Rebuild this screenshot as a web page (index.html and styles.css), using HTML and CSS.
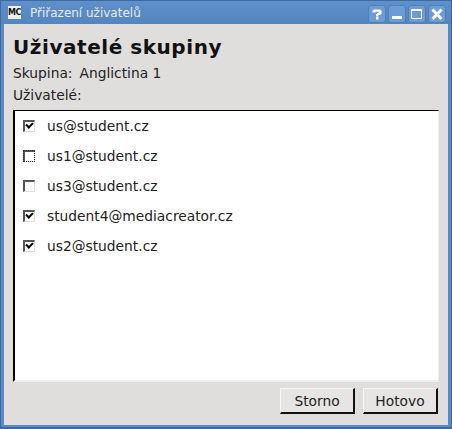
FILE: index.html
```html
<!DOCTYPE html>
<html lang="cs">
<head>
<meta charset="utf-8">
<title>Přiřazení uživatelů</title>
<link rel="stylesheet" href="styles.css">
</head>
<body>
<div class="window">
  <header class="titlebar">
    <span class="app-icon">MC</span>
    <span class="title">Přiřazení uživatelů</span>
    <div class="controls">
      <span class="ctl"><svg width="16" height="16" viewBox="0 0 16 16"><path d="M3.500 6.500V4.500h1V3.500h7v1h1v3.500h-1v1H9.500v1.500h-2.500V8h1V7h1.500V5.700h-3V6.500z M7 11h2.500v2.500H7z" fill="#fff"/></svg></span>
      <span class="ctl"><svg width="16" height="16" viewBox="0 0 16 16"><rect x="3" y="10" width="10" height="3" fill="#fff"/></svg></span>
      <span class="ctl"><svg width="16" height="16" viewBox="0 0 16 16"><path d="M2.500 3.500h10v9h-10z" fill="none" stroke="#fff" stroke-width="1"/><rect x="2" y="3" width="11" height="2" fill="#fff"/></svg></span>
      <span class="ctl"><svg width="16" height="16" viewBox="0 0 16 16"><path d="M3.500 3.500l9 9.500M12.500 3.500l-9 9.500" stroke="#fff" stroke-width="3" fill="none"/></svg></span>
    </div>
  </header>
  <main class="content">
    <h1 class="heading">Uživatelé skupiny</h1>
    <div class="meta"><span>Skupina:</span><span>Anglictina 1</span></div>
    <div class="label">Uživatelé:</div>
    <ul class="list">
      <li class="row"><span class="box checked"></span>us@student.cz</li>
      <li class="row"><span class="box focused"></span>us1@student.cz</li>
      <li class="row"><span class="box"></span>us3@student.cz</li>
      <li class="row"><span class="box checked"></span>student4@mediacreator.cz</li>
      <li class="row"><span class="box checked"></span>us2@student.cz</li>
    </ul>
    <div class="actions">
      <button class="btn">Storno</button>
      <button class="btn">Hotovo</button>
    </div>
  </main>
</div>
</body>
</html>
```
FILE: styles.css
```css
html, body {
  margin: 0;
  padding: 0;
}
body {
  width: 452px;
  height: 429px;
  overflow: hidden;
  font-family: "DejaVu Sans", sans-serif;
  font-size: 13.8px;
  color: #222;
}
.window {
  width: 452px;
  height: 429px;
  box-sizing: border-box;
  display: flex;
  flex-direction: column;
  background: #5b8ac4;
  border: 1px solid #3e6a9e;
  border-width: 1px 1px 2px 1px;
  padding: 0 3px 2px 3px;
}
.titlebar {
  height: 23px;
  flex: none;
  display: flex;
  align-items: center;
  background: linear-gradient(#5f8fca, #5585bf);
  color: #e6edf6;
  margin: 0 -3px;
  padding: 0 5px 0 7px;
  box-sizing: border-box;
}
.app-icon {
  width: 13px;
  height: 13px;
  background: #f2f2f2;
  color: #111;
  font-size: 8px;
  font-weight: bold;
  line-height: 13px;
  text-align: center;
  letter-spacing: -0.5px;
  margin-right: 9px;
}
.title {
  font-size: 12px;
  flex: 1;
}
.controls {
  display: flex;
  gap: 2px;
  margin-top: 3px;
}
.ctl {
  width: 18px;
  height: 18px;
  box-sizing: border-box;
  border: 1px solid #4f7db4;
  border-radius: 3px;
  background: #6c9bd6;
  display: flex;
  align-items: center;
  justify-content: center;
}
.content {
  flex: 1;
  min-height: 0;
  display: flex;
  flex-direction: column;
  background: #dfdedc;
  padding: 11px 9px 11px;
}
.heading {
  margin: 0;
  font-size: 20px;
  line-height: 25px;
  font-weight: bold;
  color: #111;
  letter-spacing: 0.55px;
}
.meta {
  display: flex;
  gap: 7px;
  margin-top: 3px;
  line-height: 20px;
}
.label {
  margin-top: 2px;
  line-height: 20px;
}
.list {
  list-style: none;
  margin: 5px 0 0;
  padding: 0;
  flex: 1;
  min-height: 0;
  background: #fff;
  border-style: solid;
  border-width: 1px 1px 2px 2px;
  border-color: #000 #efefef #efefef #000;
}
.row {
  height: 30px;
  display: flex;
  align-items: center;
  padding-left: 9px;
  gap: 12px;
}
.box {
  width: 12px;
  height: 12px;
  box-sizing: border-box;
  border-style: solid;
  border-width: 2px 1px 1px 2px;
  border-color: #555 #ddd #ddd #555;
  background: #fff;
  position: relative;
  margin-left: -1px;
}
.box.focused {
  outline: 1px dotted #333;
  outline-offset: -1px;
}
.box.checked::after {
  content: "";
  position: absolute;
  left: 1px;
  top: 0;
  width: 5px;
  height: 3px;
  border-left: 2px solid #000;
  border-bottom: 2px solid #000;
  transform: rotate(-45deg);
}
.actions {
  display: flex;
  justify-content: flex-end;
  gap: 8px;
  margin-top: 6px;
  padding-right: 1px;
}
.btn {
  width: 75px;
  height: 26px;
  padding: 0;
  font: inherit;
  color: #222;
  background: #e6e5e3;
  border-style: solid;
  border-width: 1px 2px 2px 1px;
  border-color: #f6f6f6 #111 #111 #f6f6f6;
}
```
